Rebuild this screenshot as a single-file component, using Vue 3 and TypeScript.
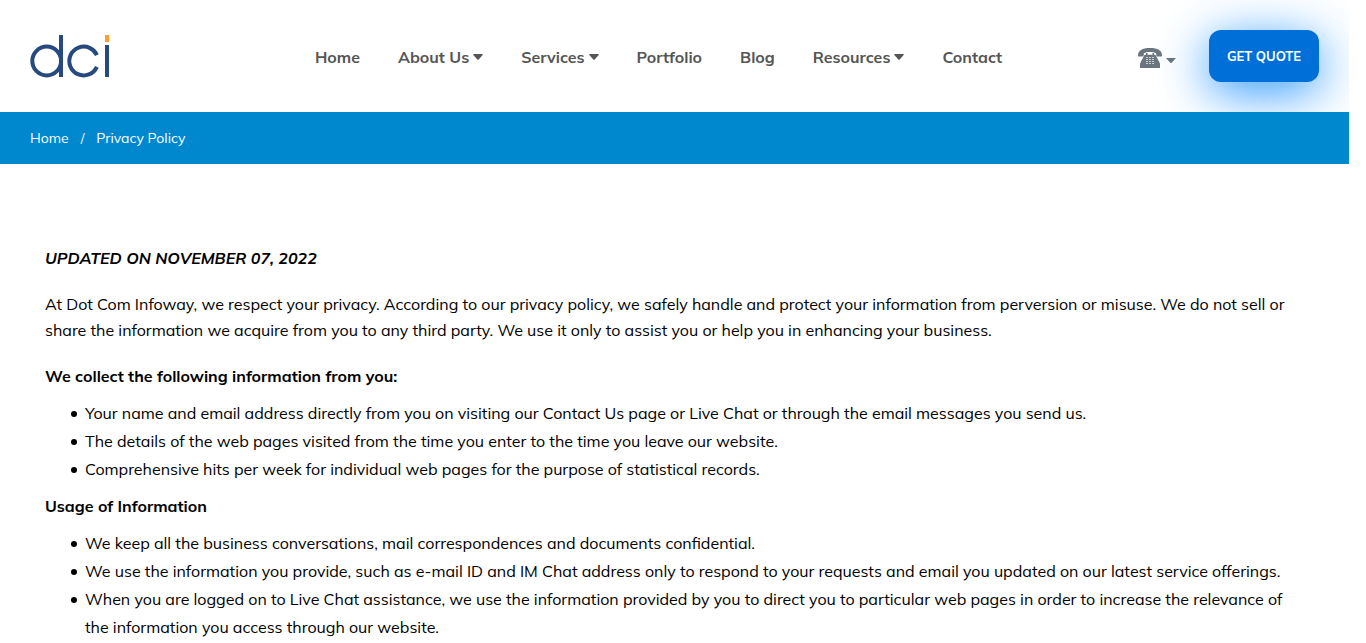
<script setup lang="ts">
interface NavItem {
  label: string
  menu: boolean
}
interface Section {
  title: string
  items: string[]
}

const navItems: NavItem[] = [
  { label: 'Home', menu: false },
  { label: 'About Us', menu: true },
  { label: 'Services', menu: true },
  { label: 'Portfolio', menu: false },
  { label: 'Blog', menu: false },
  { label: 'Resources', menu: true },
  { label: 'Contact', menu: false },
]

const sections: Section[] = [
  {
    title: 'We collect the following information from you:',
    items: [
      'Your name and email address directly from you on visiting our Contact Us page or Live Chat or through the email messages you send us.',
      'The details of the web pages visited from the time you enter to the time you leave our website.',
      'Comprehensive hits per week for individual web pages for the purpose of statistical records.',
    ],
  },
  {
    title: 'Usage of Information',
    items: [
      'We keep all the business conversations, mail correspondences and documents confidential.',
      'We use the information you provide, such as e-mail ID and IM Chat address only to respond to your requests and email you updated on our latest service offerings.',
      'When you are logged on to Live Chat assistance, we use the information provided by you to direct you to particular web pages in order to increase the relevance of the information you access through our website.',
    ],
  },
]
</script>

<template>
  <div class="page">
    <header class="header">
      <a class="logo" href="#" aria-label="dci home">
        <svg width="80" height="44" viewBox="0 0 80 44" fill="none" aria-hidden="true">
          <circle cx="16.700" cy="26" r="14.400" stroke="#264a80" stroke-width="4" />
          <rect x="29" y="0" width="4" height="42" fill="#264a80" />
          <circle
            cx="53.700" cy="26" r="14.400" stroke="#264a80" stroke-width="4"
            pathLength="360" stroke-dasharray="312 48" transform="rotate(24 53.7 26)"
          />
          <rect x="75" y="10" width="4" height="32" fill="#264a80" />
          <rect x="75" y="0" width="4" height="7" fill="#ff9f2e" />
        </svg>
      </a>
      <nav class="nav" aria-label="Main">
        <a v-for="item in navItems" :key="item.label" class="nav-link" href="#">
          {{ item.label }}
          <svg v-if="item.menu" class="caret" width="10" height="6" viewBox="0 0 10 6" aria-hidden="true">
            <path d="M.8 0h8.400q1.200 0 .4 1L5.700 5.400q-.7.700-1.400 0L.4 1Q-.4 0 .8 0z" fill="currentColor" />
          </svg>
        </a>
      </nav>
      <div class="actions">
        <button class="phone" type="button" aria-label="Phone numbers">
          <svg width="24" height="20" viewBox="0 0 24 20" aria-hidden="true">
            <path
              d="M0 7.500C0 2.500 4 0 12 0s12 2.500 12 7.500c0 .7-.4 1-1 1h-3.800c-.7 0-1-.4-1-1V5.600C16 3.600 8 3.600 5.800 5.600v1.900c0 .6-.3 1-1 1H1c-.6 0-1-.3-1-1z"
              fill="currentColor"
            />
            <path
              d="M8 5h1.500v1.800h5V5H16v1.800h.8c.6 0 .9.400 1.200 1l3.600 7c.3.600.4 1 .4 1.600V20H2v-3.600c0-.6.1-1 .4-1.600l3.600-7c.3-.6.6-1 1.200-1H8z"
              fill="currentColor" stroke="#fff" stroke-width="1" paint-order="stroke"
            />
            <g fill="#fff" opacity=".65">
              <rect x="8" y="9" width="2" height="1" /><rect x="11" y="9" width="2" height="1" /><rect x="14" y="9" width="2" height="1" />
              <rect x="8" y="11" width="2" height="1" /><rect x="11" y="11" width="2" height="1" /><rect x="14" y="11" width="2" height="1" />
              <rect x="8" y="13" width="2" height="1" /><rect x="11" y="13" width="2" height="1" /><rect x="14" y="13" width="2" height="1" />
              <rect x="8" y="15" width="2" height="1" /><rect x="11" y="15" width="2" height="1" /><rect x="14" y="15" width="2" height="1" />
            </g>
          </svg>
          <svg class="phone-caret" width="10" height="6" viewBox="0 0 10 6" aria-hidden="true">
            <path d="M0 0h10L5.700 4.700q-.7.700-1.400 0z" fill="currentColor" />
          </svg>
        </button>
        <button class="quote" type="button">GET QUOTE</button>
      </div>
    </header>

    <nav class="breadcrumb" aria-label="Breadcrumb">
      <a href="#">Home</a>
      <span class="slash">/</span>
      <span>Privacy Policy</span>
    </nav>

    <main class="content">
      <p class="updated">UPDATED ON NOVEMBER 07, 2022</p>
      <p class="intro">
        At Dot Com Infoway, we respect your privacy. According to our privacy policy, we safely handle and protect your
        information from perversion or misuse. We do not sell or share the information we acquire from you to any third
        party. We use it only to assist you or help you in enhancing your business.
      </p>
      <section v-for="section in sections" :key="section.title">
        <h2>{{ section.title }}</h2>
        <ul>
          <li v-for="text in section.items" :key="text">{{ text }}</li>
        </ul>
      </section>
    </main>
  </div>
</template>

<style>
body {
  margin: 0;
  background: #fff;
}
</style>

<style scoped>
.page {
  margin-right: 17px;
  overflow: hidden;
  font-family: Mulish, Muli, "Open Sans", "Noto Sans", sans-serif;
  font-size: 16px;
  line-height: 26px;
  color: #000;
}
a {
  color: inherit;
  text-decoration: none;
}
button {
  border: 0;
  padding: 0;
  background: none;
  font: inherit;
  cursor: pointer;
}
.header {
  display: flex;
  align-items: center;
  height: 112px;
  padding: 2px 30px 0;
  box-sizing: border-box;
}
.logo,
.logo svg {
  display: block;
}
.nav {
  display: flex;
  flex: 1;
  justify-content: center;
  gap: 38px;
  padding-left: 69px;
}
.nav-link {
  display: flex;
  align-items: center;
  gap: 4px;
  color: #555;
  font-weight: 700;
  line-height: 28px;
  white-space: nowrap;
}
.actions {
  display: flex;
  align-items: center;
  gap: 33px;
}
.phone {
  display: flex;
  align-items: center;
  gap: 4px;
  padding-top: 2px;
  color: #6c757d;
}
.phone svg {
  display: block;
}
.phone .phone-caret {
  margin-top: 6px;
}
.quote {
  width: 110px;
  height: 52px;
  margin-bottom: 2px;
  border-radius: 12px;
  background: #0070d8;
  box-shadow: 0 10px 50px #2896ff;
  color: #fff;
  font-size: 13px;
  font-weight: 700;
}
.breadcrumb {
  position: relative;
  display: flex;
  align-items: center;
  gap: 12px;
  height: 52px;
  padding: 0 30px;
  background: #0088cf;
  color: #fff;
  font-size: 14px;
}
.slash {
  font-size: 13px;
}
.content {
  padding: 81px 45px 0;
}
p {
  margin: 0 0 20px;
}
.updated {
  font-style: italic;
  font-weight: 700;
}
h2 {
  margin: 0 0 10px;
  font-size: 16px;
  font-weight: 700;
  line-height: 26px;
}
ul {
  margin: 0 0 10px;
  padding-left: 26px;
  line-height: 28px;
  list-style: none;
}
li {
  display: flex;
  gap: 8px;
}
li::before {
  content: "";
  flex: none;
  width: 6px;
  height: 6px;
  margin-top: 12px;
  border-radius: 50%;
  background: currentColor;
}
</style>
